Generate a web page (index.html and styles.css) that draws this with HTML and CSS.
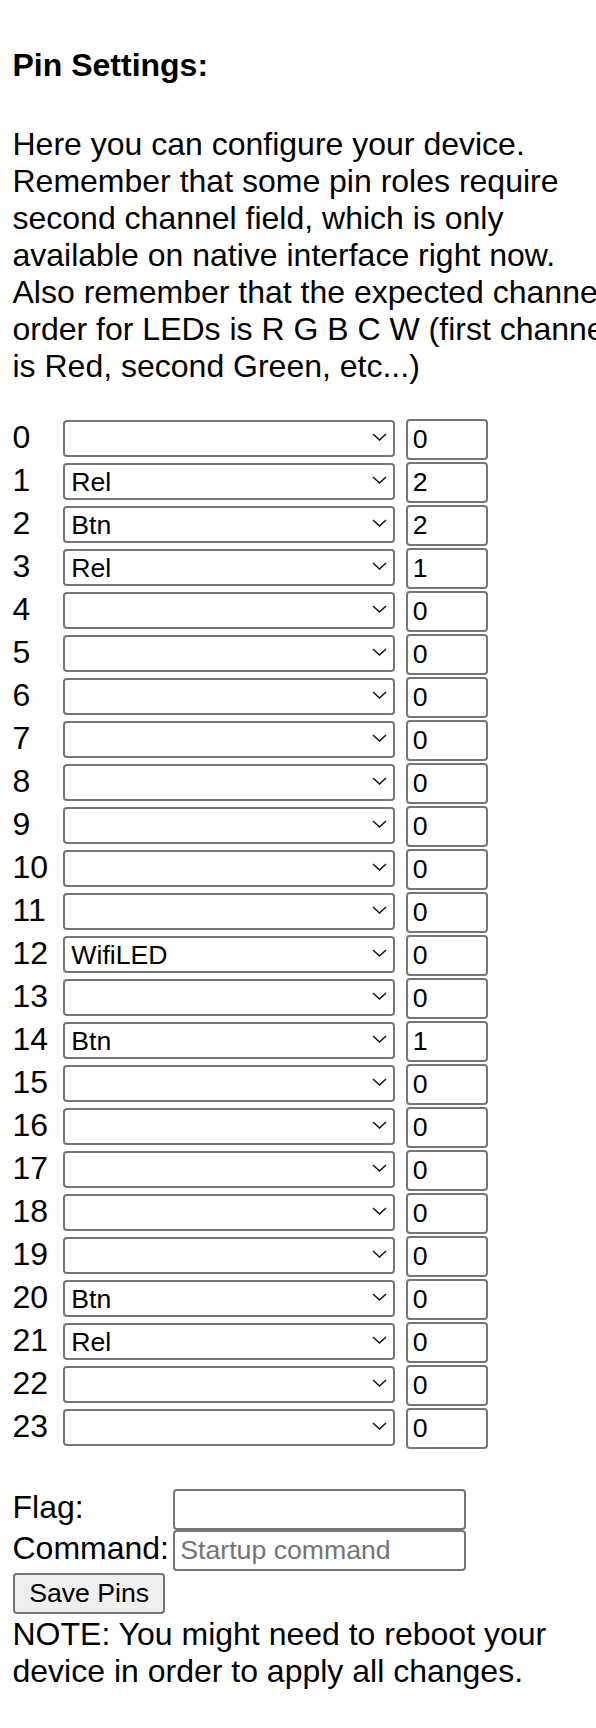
FILE: index.html
```html
<!DOCTYPE html>
<html lang="en">
<head>
<meta charset="UTF-8" />
<meta name="viewport" content="width=device-width, initial-scale=1" />
<title>Pin Settings</title>
<link rel="stylesheet" href="styles.css">
</head>
<body>

<div class="page">
  <h3 class="title">Pin Settings:</h3>

  <p class="intro">Here you can configure your device. Remember that some pin roles require second channel field, which is only available on native interface right now. Also remember that the expected channel order for LEDs is R G B C W (first channel is Red, second Green, etc...)</p>

  <form id="pins-form">
    <div class="pins" id="pins"></div>

    <div class="extra">
      <label for="flag">Flag:</label>
      <input type="text" id="flag" name="flag" />
      <label for="cmd">Command:</label>
      <input type="text" id="cmd" name="cmd" placeholder="Startup command" />
    </div>

    <button type="submit" class="save">Save Pins</button>
  </form>

  <p class="note">NOTE: You might need to reboot your device in order to apply all changes.</p>
</div>

<script>
  // current pin roles and channels
  const roles = ['', 'Rel', 'Rel_n', 'Btn', 'Btn_n', 'LED', 'LED_n', 'PWM', 'WifiLED', 'WifiLED_n'];
  const pins = [
    ['', 0], ['Rel', 2], ['Btn', 2], ['Rel', 1],
    ['', 0], ['', 0], ['', 0], ['', 0],
    ['', 0], ['', 0], ['', 0], ['', 0],
    ['WifiLED', 0], ['', 0], ['Btn', 1], ['', 0],
    ['', 0], ['', 0], ['', 0], ['', 0],
    ['Btn', 0], ['Rel', 0], ['', 0], ['', 0]
  ];

  const list = document.getElementById('pins');
  pins.forEach(([role, ch], i) => {
    const row = document.createElement('div');
    row.className = 'pin';

    const num = document.createElement('span');
    num.className = 'pin-num';
    num.textContent = i;

    const wrap = document.createElement('span');
    wrap.className = 'sel';
    const sel = document.createElement('select');
    sel.name = 'r' + i;
    roles.forEach(r => {
      const o = document.createElement('option');
      o.value = r;
      o.textContent = r;
      if (r === role) o.selected = true;
      sel.appendChild(o);
    });
    wrap.appendChild(sel);
    wrap.insertAdjacentHTML('beforeend',
      '<svg class="arrow" width="15" height="8" viewBox="0 0 15 8"><path d="M1 1 L7.5 7 L14 1" fill="none" stroke="#111" stroke-width="1.5"/></svg>');

    const inp = document.createElement('input');
    inp.type = 'number';
    inp.name = 'c' + i;
    inp.value = ch;

    row.append(num, wrap, inp);
    list.appendChild(row);
  });

  document.getElementById('pins-form').addEventListener('submit', e => {
    e.preventDefault();
  });
</script>

</body>
</html>
```

FILE: styles.css
```css
body {
  margin: 0;
  font-family: "Liberation Sans", Arial, sans-serif;
  font-size: 32px;
  color: #000;
  background: #fff;
  overflow-x: hidden;
}
.page {
  width: 606px;
  padding: 47px 0 0 12.5px;
}
.title {
  margin: 0;
  font-size: 32px;
  font-weight: bold;
}
.intro {
  margin: 41.6px 0 0;
}
.pins {
  margin-top: 34.3px;
}
.pin {
  display: flex;
  align-items: baseline;
  height: 43px;
}
.pin-num {
  width: 50.8px;
}
.sel {
  position: relative;
  display: inline-block;
}
select,
input {
  box-sizing: border-box;
  border: 2px solid #767676;
  border-radius: 4px;
  background: #fff;
  color: #000;
  font-family: "Liberation Sans", Arial, sans-serif;
  font-size: 26.67px;
  margin: 0;
}
select {
  -webkit-appearance: none;
  appearance: none;
  width: 332px;
  height: 37px;
  padding: 0 30px 0 6px;
}
.arrow {
  position: absolute;
  right: 8.6px;
  top: 14px;
  pointer-events: none;
}
.pin input {
  margin-left: 10.4px;
  width: 82.6px;
  height: 41px;
  padding: 0 5px;
  -moz-appearance: textfield;
}
.pin input::-webkit-outer-spin-button,
.pin input::-webkit-inner-spin-button {
  -webkit-appearance: none;
  margin: 0;
}
.extra {
  display: grid;
  grid-template-columns: 156.5px 292.4px;
  column-gap: 4.3px;
  align-items: baseline;
  margin-top: 37.7px;
}
.extra input {
  height: 41px;
  padding: 0 5px;
}
.extra input::placeholder {
  color: #757575;
}
.save {
  display: block;
  margin: 2.5px 0 0 0.8px;
  width: 151.7px;
  height: 40.7px;
  padding: 0;
  font-family: "Liberation Sans", Arial, sans-serif;
  font-size: 26.67px;
  color: #000;
  background: #efefef;
  border: 2px solid #767676;
  border-radius: 4px;
}
.note {
  margin: 2px 0 0;
}
```
